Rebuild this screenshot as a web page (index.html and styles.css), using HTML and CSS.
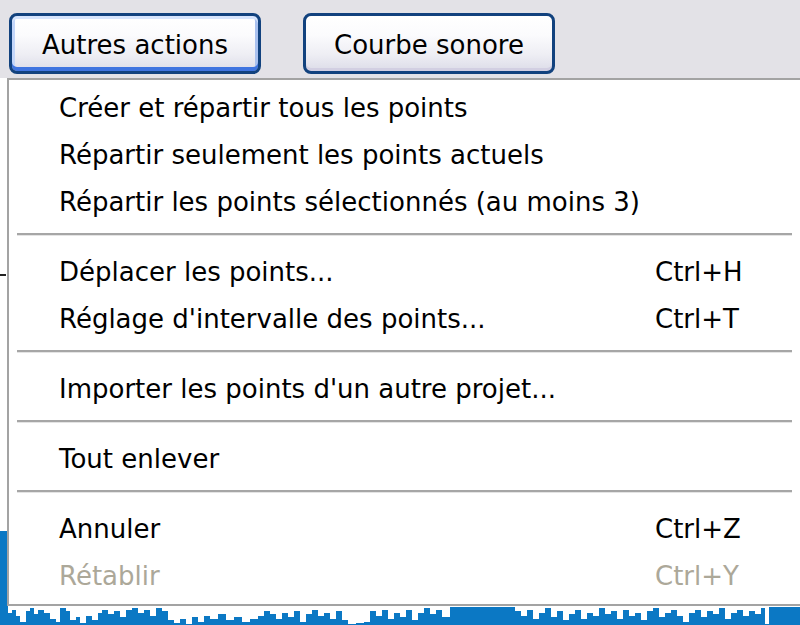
FILE: index.html
```html
<!DOCTYPE html>
<html lang="fr">
<head>
<meta charset="utf-8">
<title>Autres actions</title>
<link rel="stylesheet" href="styles.css">
</head>
<body>
<div class="toolbar">
  <button class="btn btn-focus">Autres actions</button>
  <button class="btn">Courbe sonore</button>
</div>
<div class="plot">
  <div class="tick"></div>
  <svg class="wave" width="800" height="94" viewBox="0 0 800 94">
    <path fill="#0b78c4" d="M0,0 H8 V82 H12 V79 H16 V85 H20 V91 H26 V80 H30 V77 H34 V83 H38 V79 H44 V82 H50 V88 H56 V91 H60 V77 H66 V80 H70 V89 H76 V86 H80 V92 H86 V85 H92 V89 H98 V82 H102 V79 H108 V83 H114 V80 H120 V86 H126 V79 H132 V77 H138 V82 H144 V79 H150 V85 H156 V77 H162 V80 H168 V89 H174 V92 H180 V88 H186 V93 H192 V86 H198 V91 H204 V85 H210 V88 H218 V83 H226 V89 H234 V86 H242 V91 H250 V88 H258 V85 H264 V80 H270 V83 H276 V88 H282 V82 H288 V86 H294 V80 H300 V91 H306 V83 H312 V79 H318 V85 H324 V82 H330 V88 H336 V80 H342 V89 H348 V93 H356 V92 H364 V91 H370 V80 H376 V85 H382 V79 H388 V88 H394 V82 H400 V86 H406 V79 H412 V89 H418 V82 H424 V77 H430 V83 H436 V79 H442 V86 H450 V76 H515 V80 H521 V85 H527 V79 H533 V88 H539 V82 H545 V77 H551 V86 H557 V80 H563 V89 H569 V83 H575 V79 H581 V88 H587 V82 H593 V85 H599 V77 H605 V83 H611 V80 H617 V88 H623 V79 H629 V85 H635 V82 H641 V89 H647 V80 H653 V77 H659 V86 H665 V82 H671 V79 H677 V85 H683 V91 H689 V82 H695 V79 H701 V86 H707 V80 H713 V83 H719 V77 H725 V88 H731 V82 H737 V79 H743 V85 H749 V80 H755 V83 H761 V77 H765 V93 H769 V76 H800 V94 H0 Z"/>
  </svg>
</div>
<div class="menu">
  <div class="item"><span>Créer et répartir tous les points</span></div>
  <div class="item"><span>Répartir seulement les points actuels</span></div>
  <div class="item"><span>Répartir les points sélectionnés (au moins 3)</span></div>
  <div class="sep"><div class="sep-line"></div></div>
  <div class="item"><span>Déplacer les points...</span><span>Ctrl+H</span></div>
  <div class="item"><span>Réglage d'intervalle des points...</span><span>Ctrl+T</span></div>
  <div class="sep"><div class="sep-line"></div></div>
  <div class="item"><span>Importer les points d'un autre projet...</span></div>
  <div class="sep"><div class="sep-line"></div></div>
  <div class="item"><span>Tout enlever</span></div>
  <div class="sep"><div class="sep-line"></div></div>
  <div class="item"><span>Annuler</span><span>Ctrl+Z</span></div>
  <div class="item disabled"><span>Rétablir</span><span>Ctrl+Y</span></div>
</div>
</body>
</html>
```
FILE: styles.css
```css
html, body {
  margin: 0;
  padding: 0;
}
body {
  width: 800px;
  height: 625px;
  overflow: hidden;
  position: relative;
  background: #ffffff;
  font-family: "DejaVu Sans", Verdana, sans-serif;
  font-size: 26px;
  color: #000;
}
.toolbar {
  box-sizing: border-box;
  height: 78px;
  background: #e3e2e7;
  display: flex;
  align-items: flex-start;
  gap: 42px;
  padding: 13px 0 0 9px;
}
.btn {
  box-sizing: border-box;
  width: 252px;
  height: 61px;
  margin: 0;
  padding: 3px 0 0 0;
  border: 3px solid #12427e;
  border-radius: 8px;
  font-family: "DejaVu Sans", Verdana, sans-serif;
  font-size: 26px;
  color: #000;
  background: linear-gradient(to bottom, #ffffff 0%, #fbfbfd 35%, #eeeef4 70%, #dcdce8 100%);
  box-shadow: inset 0 -3px 0 #d2cfe2;
}
.btn-focus {
  box-shadow: inset 0 -4px 0 #3f74e0, inset 0 3px 0 #d6e4fd, inset 3px 0 0 #c3d6fa, inset -3px 0 0 #a9c1ef;
}
.plot {
  height: 547px;
  display: flex;
  flex-direction: column;
  position: relative;
  background: #ffffff;
}
.tick {
  position: absolute;
  left: 0;
  top: 196px;
  width: 6px;
  height: 2px;
  background: #222;
}
.wave {
  display: block;
  margin-top: auto;
}
.menu {
  position: absolute;
  top: 78px;
  left: 7px;
  width: 820px;
  background: #ffffff;
  border: 2px solid #a3a3a3;
  border-right: none;
  padding: 2px 0 7px 0;
}
.item {
  display: grid;
  grid-template-columns: 596px auto;
  height: 47px;
  box-sizing: border-box;
  padding: 6px 0 0 50px;
  line-height: 41px;
  white-space: nowrap;
}
.item.disabled {
  color: #aca899;
}
.sep {
  height: 23px;
  display: flex;
  align-items: center;
}
.sep-line {
  margin-left: 8px;
  width: 775px;
  height: 0;
  border-top: 2px solid #a6a6a6;
  border-bottom: 1px solid #e4e4e4;
}
```
